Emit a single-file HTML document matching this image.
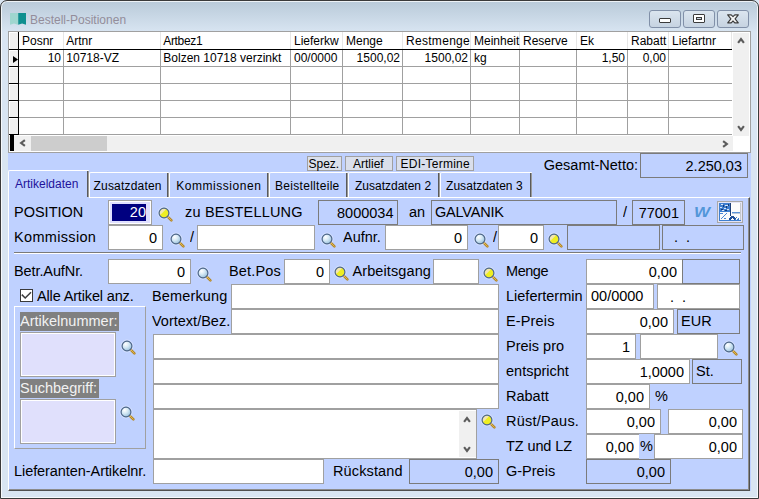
<!DOCTYPE html>
<html><head><meta charset="utf-8"><style>
html,body{margin:0;padding:0;width:759px;height:499px;overflow:hidden;background:#d9e5f2}
#w{position:relative;width:759px;height:499px;overflow:hidden;font-family:"Liberation Sans", sans-serif}
#w div,#w svg,#w span{position:absolute}
.t{white-space:nowrap;color:#000}
</style></head><body><svg width="0" height="0" style="position:absolute"><defs><radialGradient id="gy" cx="0.35" cy="0.3" r="0.8"><stop offset="0" stop-color="#fff8c0"/><stop offset="0.45" stop-color="#f2ec3a"/><stop offset="1" stop-color="#d8cf20"/></radialGradient><radialGradient id="gb" cx="0.35" cy="0.3" r="0.8"><stop offset="0" stop-color="#ffffff"/><stop offset="0.45" stop-color="#d4e8f4"/><stop offset="1" stop-color="#92bcd8"/></radialGradient></defs></svg><div id="w">
<div style="left:0;top:0;width:759px;height:499px;background:#d9e5f2"></div>
<div style="left:0;top:0;width:757px;height:497px;border:1px solid #3a3a3a;border-radius:7px 7px 0 0;background:linear-gradient(#b9cad9 0px,#d6e3f0 29px,#d9e5f2 31px);box-shadow:inset 0 0 0 1px rgba(255,255,255,0.75)"></div>
<svg style="left:10px;top:13px" width="17" height="13" viewBox="0 0 17 13"><path d="M0 0H8V11.8L4 10.6L0 11.8Z" fill="#9fd6cf"/><path d="M8.2 0H16V11.8L12.1 10.6L8.2 11.8Z" fill="#0f8f8f"/></svg>
<span class="t" style="left:30px;top:10.34px;font-size:12px;line-height:20px;color:#938d9a;">Bestell-Positionen</span>
<div style="left:649px;top:10px;width:32px;height:18px;border:1px solid #8190a8;border-radius:3px;box-sizing:border-box;background:linear-gradient(#dbe5ef,#c6d3e1)"></div>
<div style="left:683px;top:10px;width:32px;height:18px;border:1px solid #8190a8;border-radius:3px;box-sizing:border-box;background:linear-gradient(#dbe5ef,#c6d3e1)"></div>
<div style="left:717px;top:10px;width:32px;height:18px;border:1px solid #8190a8;border-radius:3px;box-sizing:border-box;background:linear-gradient(#dbe5ef,#c6d3e1)"></div>
<div style="left:659px;top:18px;width:12px;height:5px;border:1px solid #3b3b3b;box-sizing:border-box;background:#fff;border-radius:1px"></div>
<div style="left:693px;top:14px;width:12px;height:9px;border:1px solid #3b3b3b;box-sizing:border-box;background:#fff;border-radius:1px"><div style="position:absolute;left:2px;top:2px;width:6px;height:3px;border:1px solid #3b3b3b;box-sizing:border-box;background:#c8d4e2"></div></div>
<svg style="left:726.5px;top:13.5px;overflow:visible" width="12" height="10" viewBox="0 0 12 10"><path d="M0.7 0.8H4.2L6 2.6L7.8 0.8H11.3L8.1 4.8L11.3 8.8H7.8L6 7L4.2 8.8H0.7L3.9 4.8Z" fill="#f6f6f6" stroke="#3b3b3b" stroke-width="1.15" stroke-linejoin="round"/></svg>
<div style="left:8px;top:31px;width:743px;height:122px;background:#fff;border:1px solid #a0a0a0;box-sizing:border-box"></div>
<div style="left:9px;top:32px;width:9px;height:103px;background:#f0f0f0"></div>
<div style="left:9px;top:32px;width:1px;height:16px;background:#fff"></div>
<div style="left:9px;top:32px;width:8px;height:1px;background:#fff"></div>
<div style="left:9px;top:50px;width:1px;height:16px;background:#fff"></div>
<div style="left:9px;top:50px;width:8px;height:1px;background:#fff"></div>
<div style="left:9px;top:67px;width:1px;height:16px;background:#fff"></div>
<div style="left:9px;top:67px;width:8px;height:1px;background:#fff"></div>
<div style="left:9px;top:84px;width:1px;height:16px;background:#fff"></div>
<div style="left:9px;top:84px;width:8px;height:1px;background:#fff"></div>
<div style="left:9px;top:101px;width:1px;height:16px;background:#fff"></div>
<div style="left:9px;top:101px;width:8px;height:1px;background:#fff"></div>
<div style="left:9px;top:118px;width:1px;height:16px;background:#fff"></div>
<div style="left:9px;top:118px;width:8px;height:1px;background:#fff"></div>
<div style="left:18px;top:32px;width:1px;height:103px;background:#000"></div>
<div style="left:63px;top:32px;width:1px;height:17px;background:#e6e6e6"></div>
<div style="left:160px;top:32px;width:1px;height:17px;background:#e6e6e6"></div>
<div style="left:290px;top:32px;width:1px;height:17px;background:#e6e6e6"></div>
<div style="left:342px;top:32px;width:1px;height:17px;background:#e6e6e6"></div>
<div style="left:402px;top:32px;width:1px;height:17px;background:#e6e6e6"></div>
<div style="left:470px;top:32px;width:1px;height:17px;background:#e6e6e6"></div>
<div style="left:519px;top:32px;width:1px;height:17px;background:#e6e6e6"></div>
<div style="left:576px;top:32px;width:1px;height:17px;background:#e6e6e6"></div>
<div style="left:627px;top:32px;width:1px;height:17px;background:#e6e6e6"></div>
<div style="left:668px;top:32px;width:1px;height:17px;background:#e6e6e6"></div>
<div style="left:731px;top:32px;width:1px;height:17px;background:#e6e6e6"></div>
<div style="left:9px;top:49px;width:723px;height:1px;background:#000"></div>
<div style="left:9px;top:66px;width:9px;height:1px;background:#000"></div>
<div style="left:19px;top:66px;width:713px;height:1px;background:#a0a0a0"></div>
<div style="left:9px;top:83px;width:9px;height:1px;background:#000"></div>
<div style="left:19px;top:83px;width:713px;height:1px;background:#a0a0a0"></div>
<div style="left:9px;top:100px;width:9px;height:1px;background:#000"></div>
<div style="left:19px;top:100px;width:713px;height:1px;background:#a0a0a0"></div>
<div style="left:9px;top:117px;width:9px;height:1px;background:#000"></div>
<div style="left:19px;top:117px;width:713px;height:1px;background:#a0a0a0"></div>
<div style="left:9px;top:134px;width:9px;height:1px;background:#000"></div>
<div style="left:19px;top:134px;width:713px;height:1px;background:#a0a0a0"></div>
<div style="left:63px;top:50px;width:1px;height:85px;background:#a0a0a0"></div>
<div style="left:160px;top:50px;width:1px;height:85px;background:#a0a0a0"></div>
<div style="left:290px;top:50px;width:1px;height:85px;background:#a0a0a0"></div>
<div style="left:342px;top:50px;width:1px;height:85px;background:#a0a0a0"></div>
<div style="left:402px;top:50px;width:1px;height:85px;background:#a0a0a0"></div>
<div style="left:470px;top:50px;width:1px;height:85px;background:#a0a0a0"></div>
<div style="left:519px;top:50px;width:1px;height:85px;background:#a0a0a0"></div>
<div style="left:576px;top:50px;width:1px;height:85px;background:#a0a0a0"></div>
<div style="left:627px;top:50px;width:1px;height:85px;background:#a0a0a0"></div>
<div style="left:668px;top:50px;width:1px;height:85px;background:#a0a0a0"></div>
<span class="t" style="left:22px;top:30.84px;font-size:12px;line-height:20px;color:#000;">Posnr</span>
<span class="t" style="left:66.2px;top:30.84px;font-size:12px;line-height:20px;color:#000;">Artnr</span>
<span class="t" style="left:163.2px;top:30.84px;font-size:12px;line-height:20px;color:#000;letter-spacing:-0.3px;">Artbez1</span>
<span class="t" style="left:294px;top:30.84px;font-size:12px;line-height:20px;color:#000;">Lieferkw</span>
<span class="t" style="left:346px;top:30.84px;font-size:12px;line-height:20px;color:#000;">Menge</span>
<span class="t" style="left:406px;top:30.84px;font-size:12px;line-height:20px;color:#000;letter-spacing:0.3px;">Restmenge</span>
<span class="t" style="left:474px;top:30.84px;font-size:12px;line-height:20px;color:#000;">Meinheit</span>
<span class="t" style="left:523px;top:30.84px;font-size:12px;line-height:20px;color:#000;">Reserve</span>
<span class="t" style="left:580px;top:30.84px;font-size:12px;line-height:20px;color:#000;">Ek</span>
<span class="t" style="left:631px;top:30.84px;font-size:12px;line-height:20px;color:#000;">Rabatt</span>
<span class="t" style="left:672px;top:30.84px;font-size:12px;line-height:20px;color:#000;">Liefartnr</span>
<span class="t" style="left:-339px;width:400px;text-align:right;top:47.84px;font-size:12px;line-height:20px;color:#000;">10</span>
<span class="t" style="left:66.3px;top:47.84px;font-size:12px;line-height:20px;color:#000;">10718-VZ</span>
<span class="t" style="left:163.3px;top:47.84px;font-size:12px;line-height:20px;color:#000;">Bolzen 10718 verzinkt</span>
<span class="t" style="left:294px;top:47.84px;font-size:12px;line-height:20px;color:#000;">00/0000</span>
<span class="t" style="left:0px;width:400px;text-align:right;top:47.84px;font-size:12px;line-height:20px;color:#000;">1500,02</span>
<span class="t" style="left:68px;width:400px;text-align:right;top:47.84px;font-size:12px;line-height:20px;color:#000;">1500,02</span>
<span class="t" style="left:474px;top:47.84px;font-size:12px;line-height:20px;color:#000;">kg</span>
<span class="t" style="left:225px;width:400px;text-align:right;top:47.84px;font-size:12px;line-height:20px;color:#000;">1,50</span>
<span class="t" style="left:266px;width:400px;text-align:right;top:47.84px;font-size:12px;line-height:20px;color:#000;">0,00</span>
<svg style="left:12px;top:55px" width="7" height="9" viewBox="0 0 7 9"><path d="M1 1L6 4.5L1 8Z" fill="#000"/></svg>
<div style="left:733px;top:33px;width:16px;height:103px;background:#f0f0f0"></div>
<svg style="left:734.5px;top:34.7px;overflow:visible" width="12" height="12" viewBox="-6 -6 12 12"><path d="M-2.9 1.9L0 -1.9L2.9 1.9" stroke="#5c5c5c" stroke-width="2.1" fill="none" stroke-linejoin="miter"/></svg>
<svg style="left:734.5px;top:121.9px;overflow:visible" width="12" height="12" viewBox="-6 -6 12 12"><path d="M-2.9 -1.9L0 1.9L2.9 -1.9" stroke="#5c5c5c" stroke-width="2.1" fill="none" stroke-linejoin="miter"/></svg>
<div style="left:9px;top:136px;width:724px;height:15px;background:#f0f0f0"></div>
<div style="left:10px;top:135px;width:4px;height:16px;background:#000"></div>
<div style="left:31px;top:136px;width:76px;height:15px;background:#cdcdcd"></div>
<svg style="left:16.6px;top:137.4px;overflow:visible" width="12" height="12" viewBox="-6 -6 12 12"><path d="M1.9 -2.9L-1.9 0L1.9 2.9" stroke="#5c5c5c" stroke-width="2.1" fill="none" stroke-linejoin="miter"/></svg>
<svg style="left:719px;top:137.5px;overflow:visible" width="12" height="12" viewBox="-6 -6 12 12"><path d="M-1.9 -2.9L1.9 0L-1.9 2.9" stroke="#5c5c5c" stroke-width="2.1" fill="none" stroke-linejoin="miter"/></svg>
<div style="left:8px;top:153px;width:743px;height:338px;background:#bfd1ff"></div>
<div style="left:307px;top:156px;width:35px;height:15px;background:#dadfeb;border:1px solid #a0a0a0;box-sizing:border-box"></div>
<span class="t" style="left:308.5px;top:153.84px;font-size:12px;line-height:20px;color:#000;">Spez.</span>
<div style="left:345px;top:156px;width:48px;height:15px;background:#dadfeb;border:1px solid #a0a0a0;box-sizing:border-box"></div>
<span class="t" style="left:353px;top:153.84px;font-size:12px;line-height:20px;color:#000;">Artlief</span>
<div style="left:396px;top:156px;width:78px;height:15px;background:#dadfeb;border:1px solid #a0a0a0;box-sizing:border-box"></div>
<span class="t" style="left:400.5px;top:153.84px;font-size:12px;line-height:20px;color:#000;letter-spacing:0.25px;">EDI-Termine</span>
<span class="t" style="left:238px;width:400px;text-align:right;top:154.98px;font-size:14.5px;line-height:20px;color:#000;transform:scaleY(1.05);transform-origin:0 15.02px;">Gesamt-Netto:</span>
<div style="left:640px;top:153px;width:108px;height:25px;background:#bfd1ff;border:1px solid #7b7b7b;box-sizing:border-box"></div>
<span class="t" style="left:342px;width:400px;text-align:right;top:155.98px;font-size:14.5px;line-height:20px;color:#000;transform:scaleY(1.05);transform-origin:0 15.02px;">2.250,03</span>
<div style="left:8px;top:197px;width:742px;height:294px;border-top:1px solid #fff;border-left:1px solid #fff;border-right:1px solid #505050;border-bottom:1px solid #505050;box-sizing:border-box"></div>
<div style="left:9px;top:198px;width:740px;height:292px;border-right:1px solid #8c8c8c;border-bottom:1px solid #8c8c8c;box-sizing:border-box"></div>
<div style="left:8px;top:170px;width:81px;height:29px;background:#bfd1ff;border-top:1px solid #fff;border-left:1px solid #fff;border-radius:2px 1px 0 0;box-sizing:border-box"></div>
<div style="left:87px;top:171px;width:1px;height:26px;background:#5a5a5a"></div>
<div style="left:88px;top:171px;width:1px;height:26px;background:#9a9a9a"></div>
<span class="t" style="left:15px;top:173.84px;font-size:12px;line-height:20px;color:#22139a;">Artikeldaten</span>
<div style="left:89px;top:172px;width:80px;height:25px;background:#bfd1ff;border-top:1px solid #fff;border-left:1px solid #fff;border-radius:2px 1px 0 0;box-sizing:border-box"></div>
<div style="left:167px;top:173px;width:1px;height:24px;background:#5a5a5a"></div>
<div style="left:168px;top:173px;width:1px;height:24px;background:#9a9a9a"></div>
<span class="t" style="left:93.5px;top:175.84px;font-size:12px;line-height:20px;color:#000;letter-spacing:0.2px;">Zusatzdaten</span>
<div style="left:169px;top:172px;width:100px;height:25px;background:#bfd1ff;border-top:1px solid #fff;border-left:1px solid #fff;border-radius:2px 1px 0 0;box-sizing:border-box"></div>
<div style="left:267px;top:173px;width:1px;height:24px;background:#5a5a5a"></div>
<div style="left:268px;top:173px;width:1px;height:24px;background:#9a9a9a"></div>
<span class="t" style="left:176.2px;top:175.84px;font-size:12px;line-height:20px;color:#000;letter-spacing:0.55px;">Kommissionen</span>
<div style="left:269px;top:172px;width:79px;height:25px;background:#bfd1ff;border-top:1px solid #fff;border-left:1px solid #fff;border-radius:2px 1px 0 0;box-sizing:border-box"></div>
<div style="left:346px;top:173px;width:1px;height:24px;background:#5a5a5a"></div>
<div style="left:347px;top:173px;width:1px;height:24px;background:#9a9a9a"></div>
<span class="t" style="left:275px;top:175.84px;font-size:12px;line-height:20px;color:#000;letter-spacing:0.3px;">Beistellteile</span>
<div style="left:348px;top:172px;width:92px;height:25px;background:#bfd1ff;border-top:1px solid #fff;border-left:1px solid #fff;border-radius:2px 1px 0 0;box-sizing:border-box"></div>
<div style="left:438px;top:173px;width:1px;height:24px;background:#5a5a5a"></div>
<div style="left:439px;top:173px;width:1px;height:24px;background:#9a9a9a"></div>
<span class="t" style="left:355px;top:175.84px;font-size:12px;line-height:20px;color:#000;">Zusatzdaten 2</span>
<div style="left:440px;top:172px;width:92px;height:25px;background:#bfd1ff;border-top:1px solid #fff;border-left:1px solid #fff;border-radius:2px 1px 0 0;box-sizing:border-box"></div>
<div style="left:530px;top:173px;width:1px;height:24px;background:#5a5a5a"></div>
<div style="left:531px;top:173px;width:1px;height:24px;background:#9a9a9a"></div>
<span class="t" style="left:446px;top:175.84px;font-size:12px;line-height:20px;color:#000;letter-spacing:0.05px;">Zusatzdaten 3</span>
<span class="t" style="left:14px;top:201.98px;font-size:14.5px;line-height:20px;color:#000;transform:scaleY(1.05);transform-origin:0 15.02px;">POSITION</span>
<div style="left:108px;top:200px;width:44px;height:25px;background:#fff;border:1px solid #a0a0a0;box-sizing:border-box"></div>
<div style="left:110px;top:202px;width:40px;height:21px;background:#e0e0ff"></div>
<div style="left:112px;top:204px;width:34px;height:17px;background:#000080"></div>
<span class="t" style="left:-254px;width:400px;text-align:right;top:201.98px;font-size:14.5px;line-height:20px;color:#fff;transform:scaleY(1.05);transform-origin:0 15.02px;">20</span>
<svg style="left:155.5px;top:205px;overflow:visible" width="18" height="18" viewBox="0 0 18 18"><line x1="11.6" y1="11.6" x2="15.4" y2="15.4" stroke="#b48628" stroke-width="2.6" stroke-linecap="round"/><line x1="12" y1="12" x2="15.2" y2="15.2" stroke="#e2bc52" stroke-width="0.9" stroke-linecap="round"/><circle cx="8" cy="8" r="6" fill="none" stroke="#ffffff" stroke-opacity="0.35" stroke-width="1"/><circle cx="8" cy="8" r="4.7" fill="#eeee22"/><path d="M8 3.3A4.7 4.7 0 0 0 3.3 8L4.5 9.8L9.8 4.5Z" fill="#f2e6b0"/><circle cx="8" cy="8" r="4.9" fill="none" stroke="#4d6686" stroke-width="1.15"/></svg>
<span class="t" style="left:185px;top:201.98px;font-size:14.5px;line-height:20px;color:#000;letter-spacing:0.19px;transform:scaleY(1.05);transform-origin:0 15.02px;">zu BESTELLUNG</span>
<div style="left:318px;top:200px;width:80px;height:25px;background:#bfd1ff;border:1px solid #7b7b7b;box-sizing:border-box"></div>
<span class="t" style="left:-6.5px;width:400px;text-align:right;top:202.98px;font-size:14.5px;line-height:20px;color:#000;transform:scaleY(1.05);transform-origin:0 15.02px;">8000034</span>
<span class="t" style="left:409px;top:201.98px;font-size:14.5px;line-height:20px;color:#000;transform:scaleY(1.05);transform-origin:0 15.02px;">an</span>
<div style="left:431px;top:200px;width:186px;height:25px;background:#bfd1ff;border:1px solid #7b7b7b;box-sizing:border-box"></div>
<span class="t" style="left:435px;top:201.98px;font-size:14.5px;line-height:20px;color:#000;letter-spacing:-0.2px;transform:scaleY(1.05);transform-origin:0 15.02px;">GALVANIK</span>
<span class="t" style="left:623px;top:201.98px;font-size:14.5px;line-height:20px;color:#000;transform:scaleY(1.05);transform-origin:0 15.02px;">/</span>
<div style="left:632px;top:200px;width:53px;height:25px;background:#bfd1ff;border:1px solid #7b7b7b;box-sizing:border-box"></div>
<span class="t" style="left:279px;width:400px;text-align:right;top:202.98px;font-size:14.5px;line-height:20px;color:#000;transform:scaleY(1.05);transform-origin:0 15.02px;">77001</span>
<span class="t" style="left:694px;top:202px;font-size:14.5px;line-height:20px;font-weight:bold;font-style:italic;color:#5296d8;transform:scaleX(1.17);transform-origin:0 0">W</span>
<div style="left:717px;top:201px;width:26px;height:22px;background:#e4e4f4;border:1px solid #a8a8a8;box-sizing:border-box"></div>
<svg style="left:719px;top:203px" width="22" height="18" viewBox="0 0 22 18" shape-rendering="crispEdges"><rect x="0" y="0" width="22" height="18" fill="#fbfbfb"/><rect x="0" y="0" width="11" height="9" fill="#3f7fd0"/><path d="M2 1h2v1h-2zM6 2h3v1h-3zM1 4h2v1h-2zM5 5h2v1h-2zM8 6h2v1h-2zM3 7h2v1h-2z" fill="#d8e6f6"/><path d="M4 2h1v2h-1zM7 3h1v2h-1zM2 6h2v1h-2zM6 7h2v1h-2zM9 1h1v2h-1z" fill="#123a78"/><rect x="11" y="0" width="1" height="13" fill="#1d3f78"/><rect x="12" y="2" width="1" height="10" fill="#ffffff"/><rect x="0" y="9" width="1" height="9" fill="#3f7fd0"/><rect x="0" y="17" width="22" height="1" fill="#3f7fd0"/><path d="M2 15h1v1h-1zM3 14h1v1h-1zM4 13h1v1h-1zM5 12h1v1h-1zM6 11h1v1h-1zM7 10h1v1h-1zM1 10h3v1h-3zM5 15h2v1h-2z" fill="#4a86d4"/><path d="M10 17V15h1v-1h1v-1h3v1h1v1h1v2h-2v-1h-1v-1h-1v1h-1v1z" fill="#1f4f98"/><rect x="13" y="9" width="8" height="1" fill="#5a92d8"/><rect x="13" y="10" width="8" height="1" fill="#b8c8dc"/><path d="M17 14h1v1h-1zM19 15h1v1h-1zM18 16h2v1h-2zM16 16h1v1h-1z" fill="#3f7fd0"/><rect x="21" y="0" width="1" height="17" fill="#c4c8d0"/></svg>
<span class="t" style="left:14px;top:226.98px;font-size:14.5px;line-height:20px;color:#000;letter-spacing:0.33px;transform:scaleY(1.05);transform-origin:0 15.02px;">Kommission</span>
<div style="left:108px;top:225px;width:55px;height:25px;background:#fff;border:1px solid #a0a0a0;box-sizing:border-box"></div>
<span class="t" style="left:-243px;width:400px;text-align:right;top:227.98px;font-size:14.5px;line-height:20px;color:#000;transform:scaleY(1.05);transform-origin:0 15.02px;">0</span>
<svg style="left:167.5px;top:230.5px;overflow:visible" width="18" height="18" viewBox="0 0 18 18"><line x1="11.6" y1="11.6" x2="15.4" y2="15.4" stroke="#b48628" stroke-width="2.6" stroke-linecap="round"/><line x1="12" y1="12" x2="15.2" y2="15.2" stroke="#e2bc52" stroke-width="0.9" stroke-linecap="round"/><circle cx="8" cy="8" r="6" fill="none" stroke="#ffffff" stroke-opacity="0.35" stroke-width="1"/><circle cx="8" cy="8" r="4.7" fill="url(#gb)"/><circle cx="8" cy="8" r="4.9" fill="none" stroke="#4d6686" stroke-width="1.15"/></svg>
<span class="t" style="left:190px;top:226.98px;font-size:14.5px;line-height:20px;color:#000;transform:scaleY(1.05);transform-origin:0 15.02px;">/</span>
<div style="left:197px;top:225px;width:118px;height:25px;background:#fff;border:1px solid #a0a0a0;box-sizing:border-box"></div>
<svg style="left:318.6px;top:230.6px;overflow:visible" width="18" height="18" viewBox="0 0 18 18"><line x1="11.6" y1="11.6" x2="15.4" y2="15.4" stroke="#b48628" stroke-width="2.6" stroke-linecap="round"/><line x1="12" y1="12" x2="15.2" y2="15.2" stroke="#e2bc52" stroke-width="0.9" stroke-linecap="round"/><circle cx="8" cy="8" r="6" fill="none" stroke="#ffffff" stroke-opacity="0.35" stroke-width="1"/><circle cx="8" cy="8" r="4.7" fill="url(#gb)"/><circle cx="8" cy="8" r="4.9" fill="none" stroke="#4d6686" stroke-width="1.15"/></svg>
<span class="t" style="left:343px;top:226.98px;font-size:14.5px;line-height:20px;color:#000;transform:scaleY(1.05);transform-origin:0 15.02px;">Aufnr.</span>
<div style="left:385px;top:225px;width:83px;height:25px;background:#fff;border:1px solid #a0a0a0;box-sizing:border-box"></div>
<span class="t" style="left:62px;width:400px;text-align:right;top:227.98px;font-size:14.5px;line-height:20px;color:#000;transform:scaleY(1.05);transform-origin:0 15.02px;">0</span>
<svg style="left:471.8px;top:230.5px;overflow:visible" width="18" height="18" viewBox="0 0 18 18"><line x1="11.6" y1="11.6" x2="15.4" y2="15.4" stroke="#b48628" stroke-width="2.6" stroke-linecap="round"/><line x1="12" y1="12" x2="15.2" y2="15.2" stroke="#e2bc52" stroke-width="0.9" stroke-linecap="round"/><circle cx="8" cy="8" r="6" fill="none" stroke="#ffffff" stroke-opacity="0.35" stroke-width="1"/><circle cx="8" cy="8" r="4.7" fill="url(#gb)"/><circle cx="8" cy="8" r="4.9" fill="none" stroke="#4d6686" stroke-width="1.15"/></svg>
<span class="t" style="left:493px;top:226.98px;font-size:14.5px;line-height:20px;color:#000;transform:scaleY(1.05);transform-origin:0 15.02px;">/</span>
<div style="left:498px;top:225px;width:46px;height:25px;background:#fff;border:1px solid #a0a0a0;box-sizing:border-box"></div>
<span class="t" style="left:138px;width:400px;text-align:right;top:227.98px;font-size:14.5px;line-height:20px;color:#000;transform:scaleY(1.05);transform-origin:0 15.02px;">0</span>
<svg style="left:545.8px;top:230.6px;overflow:visible" width="18" height="18" viewBox="0 0 18 18"><line x1="11.6" y1="11.6" x2="15.4" y2="15.4" stroke="#b48628" stroke-width="2.6" stroke-linecap="round"/><line x1="12" y1="12" x2="15.2" y2="15.2" stroke="#e2bc52" stroke-width="0.9" stroke-linecap="round"/><circle cx="8" cy="8" r="6" fill="none" stroke="#ffffff" stroke-opacity="0.35" stroke-width="1"/><circle cx="8" cy="8" r="4.7" fill="#eeee22"/><path d="M8 3.3A4.7 4.7 0 0 0 3.3 8L4.5 9.8L9.8 4.5Z" fill="#f2e6b0"/><circle cx="8" cy="8" r="4.9" fill="none" stroke="#4d6686" stroke-width="1.15"/></svg>
<div style="left:567px;top:225px;width:93px;height:25px;background:#bfd1ff;border:1px solid #7b7b7b;box-sizing:border-box"></div>
<div style="left:662px;top:225px;width:82px;height:25px;background:#bfd1ff;border:1px solid #7b7b7b;box-sizing:border-box"></div>
<span class="t" style="left:674px;top:226.98px;font-size:14.5px;line-height:20px;color:#000;transform:scaleY(1.05);transform-origin:0 15.02px;">.&nbsp;&nbsp;.</span>
<div style="left:14px;top:252px;width:727px;height:1px;background:#7a7a7a"></div>
<div style="left:14px;top:253px;width:727px;height:1px;background:#fff"></div>
<span class="t" style="left:14px;top:260.98px;font-size:14.5px;line-height:20px;color:#000;letter-spacing:-0.1px;transform:scaleY(1.05);transform-origin:0 15.02px;">Betr.AufNr.</span>
<div style="left:108px;top:259px;width:83px;height:25px;background:#fff;border:1px solid #a0a0a0;box-sizing:border-box"></div>
<span class="t" style="left:-215px;width:400px;text-align:right;top:261.98px;font-size:14.5px;line-height:20px;color:#000;transform:scaleY(1.05);transform-origin:0 15.02px;">0</span>
<svg style="left:194.5px;top:264.5px;overflow:visible" width="18" height="18" viewBox="0 0 18 18"><line x1="11.6" y1="11.6" x2="15.4" y2="15.4" stroke="#b48628" stroke-width="2.6" stroke-linecap="round"/><line x1="12" y1="12" x2="15.2" y2="15.2" stroke="#e2bc52" stroke-width="0.9" stroke-linecap="round"/><circle cx="8" cy="8" r="6" fill="none" stroke="#ffffff" stroke-opacity="0.35" stroke-width="1"/><circle cx="8" cy="8" r="4.7" fill="url(#gb)"/><circle cx="8" cy="8" r="4.9" fill="none" stroke="#4d6686" stroke-width="1.15"/></svg>
<span class="t" style="left:229px;top:260.98px;font-size:14.5px;line-height:20px;color:#000;letter-spacing:0.15px;transform:scaleY(1.05);transform-origin:0 15.02px;">Bet.Pos</span>
<div style="left:284px;top:259px;width:46px;height:25px;background:#fff;border:1px solid #a0a0a0;box-sizing:border-box"></div>
<span class="t" style="left:-76px;width:400px;text-align:right;top:261.98px;font-size:14.5px;line-height:20px;color:#000;transform:scaleY(1.05);transform-origin:0 15.02px;">0</span>
<svg style="left:331.6px;top:264.3px;overflow:visible" width="18" height="18" viewBox="0 0 18 18"><line x1="11.6" y1="11.6" x2="15.4" y2="15.4" stroke="#b48628" stroke-width="2.6" stroke-linecap="round"/><line x1="12" y1="12" x2="15.2" y2="15.2" stroke="#e2bc52" stroke-width="0.9" stroke-linecap="round"/><circle cx="8" cy="8" r="6" fill="none" stroke="#ffffff" stroke-opacity="0.35" stroke-width="1"/><circle cx="8" cy="8" r="4.7" fill="#eeee22"/><path d="M8 3.3A4.7 4.7 0 0 0 3.3 8L4.5 9.8L9.8 4.5Z" fill="#f2e6b0"/><circle cx="8" cy="8" r="4.9" fill="none" stroke="#4d6686" stroke-width="1.15"/></svg>
<span class="t" style="left:352.5px;top:260.98px;font-size:14.5px;line-height:20px;color:#000;letter-spacing:0.1px;transform:scaleY(1.05);transform-origin:0 15.02px;">Arbeitsgang</span>
<div style="left:433px;top:259px;width:46px;height:25px;background:#fff;border:1px solid #a0a0a0;box-sizing:border-box"></div>
<svg style="left:480.5px;top:265px;overflow:visible" width="18" height="18" viewBox="0 0 18 18"><line x1="11.6" y1="11.6" x2="15.4" y2="15.4" stroke="#b48628" stroke-width="2.6" stroke-linecap="round"/><line x1="12" y1="12" x2="15.2" y2="15.2" stroke="#e2bc52" stroke-width="0.9" stroke-linecap="round"/><circle cx="8" cy="8" r="6" fill="none" stroke="#ffffff" stroke-opacity="0.35" stroke-width="1"/><circle cx="8" cy="8" r="4.7" fill="#eeee22"/><path d="M8 3.3A4.7 4.7 0 0 0 3.3 8L4.5 9.8L9.8 4.5Z" fill="#f2e6b0"/><circle cx="8" cy="8" r="4.9" fill="none" stroke="#4d6686" stroke-width="1.15"/></svg>
<span class="t" style="left:506px;top:260.98px;font-size:14.5px;line-height:20px;color:#000;letter-spacing:-0.45px;transform:scaleY(1.05);transform-origin:0 15.02px;">Menge</span>
<div style="left:586px;top:259px;width:97px;height:25px;background:#fff;border:1px solid #a0a0a0;box-sizing:border-box"></div>
<span class="t" style="left:277px;width:400px;text-align:right;top:261.98px;font-size:14.5px;line-height:20px;color:#000;transform:scaleY(1.05);transform-origin:0 15.02px;">0,00</span>
<div style="left:682px;top:259px;width:58px;height:25px;background:#bfd1ff;border:1px solid #7b7b7b;box-sizing:border-box"></div>
<div style="left:20px;top:289px;width:13px;height:13px;background:#fff;border:1px solid #3a3a3a;box-sizing:border-box"></div>
<svg style="left:21px;top:290px;overflow:visible" width="11" height="11" viewBox="0 0 11 11"><path d="M0.8 4.6L4.2 8L10 2.2" stroke="#3c3c3c" stroke-width="1.5" fill="none"/></svg>
<span class="t" style="left:37px;top:285.98px;font-size:14.5px;line-height:20px;color:#000;letter-spacing:-0.15px;transform:scaleY(1.05);transform-origin:0 15.02px;">Alle Artikel anz.</span>
<span class="t" style="left:152px;top:285.98px;font-size:14.5px;line-height:20px;color:#000;letter-spacing:0.14px;transform:scaleY(1.05);transform-origin:0 15.02px;">Bemerkung</span>
<div style="left:231px;top:284px;width:268px;height:25px;background:#fff;border:1px solid #a0a0a0;box-sizing:border-box"></div>
<span class="t" style="left:506px;top:285.98px;font-size:14.5px;line-height:20px;color:#000;transform:scaleY(1.05);transform-origin:0 15.02px;">Liefertermin</span>
<div style="left:586px;top:284px;width:68px;height:25px;background:#fff;border:1px solid #a0a0a0;box-sizing:border-box"></div>
<span class="t" style="left:591px;top:285.98px;font-size:14.5px;line-height:20px;color:#000;transform:scaleY(1.05);transform-origin:0 15.02px;">00/0000</span>
<div style="left:657px;top:284px;width:83px;height:25px;background:#fff;border:1px solid #a0a0a0;box-sizing:border-box"></div>
<span class="t" style="left:670px;top:286.98px;font-size:14.5px;line-height:20px;color:#000;transform:scaleY(1.05);transform-origin:0 15.02px;">.&nbsp;&nbsp;.</span>
<div style="left:14px;top:306px;width:132px;height:143px;border-top:1px solid #fff;border-left:1px solid #fff;border-right:1px solid #a0a0a0;border-bottom:1px solid #a0a0a0;box-sizing:border-box"></div>
<div style="left:20px;top:312px;width:99px;height:19px;background:#808080"></div>
<span class="t" style="left:20px;top:310.98px;font-size:14.5px;line-height:20px;color:#f2f2f2;transform:scaleY(1.05);transform-origin:0 15.02px;">Artikelnummer:</span>
<div style="left:20px;top:332px;width:96px;height:45px;background:#e0e0fc;border:1px solid #a0a0a0;outline:1px solid #fff;outline-offset:-2px;box-sizing:border-box"></div>
<svg style="left:118.5px;top:337.5px;overflow:visible" width="18" height="18" viewBox="0 0 18 18"><line x1="11.6" y1="11.6" x2="15.4" y2="15.4" stroke="#b48628" stroke-width="2.6" stroke-linecap="round"/><line x1="12" y1="12" x2="15.2" y2="15.2" stroke="#e2bc52" stroke-width="0.9" stroke-linecap="round"/><circle cx="8" cy="8" r="6" fill="none" stroke="#ffffff" stroke-opacity="0.35" stroke-width="1"/><circle cx="8" cy="8" r="4.7" fill="url(#gb)"/><circle cx="8" cy="8" r="4.9" fill="none" stroke="#4d6686" stroke-width="1.15"/></svg>
<div style="left:20px;top:379px;width:79px;height:19px;background:#808080"></div>
<span class="t" style="left:20px;top:377.98px;font-size:14.5px;line-height:20px;color:#f2f2f2;transform:scaleY(1.05);transform-origin:0 15.02px;">Suchbegriff:</span>
<div style="left:20px;top:399px;width:96px;height:45px;background:#e0e0fc;border:1px solid #a0a0a0;outline:1px solid #fff;outline-offset:-2px;box-sizing:border-box"></div>
<svg style="left:118px;top:404.4px;overflow:visible" width="18" height="18" viewBox="0 0 18 18"><line x1="11.6" y1="11.6" x2="15.4" y2="15.4" stroke="#b48628" stroke-width="2.6" stroke-linecap="round"/><line x1="12" y1="12" x2="15.2" y2="15.2" stroke="#e2bc52" stroke-width="0.9" stroke-linecap="round"/><circle cx="8" cy="8" r="6" fill="none" stroke="#ffffff" stroke-opacity="0.35" stroke-width="1"/><circle cx="8" cy="8" r="4.7" fill="url(#gb)"/><circle cx="8" cy="8" r="4.9" fill="none" stroke="#4d6686" stroke-width="1.15"/></svg>
<span class="t" style="left:152px;top:310.98px;font-size:14.5px;line-height:20px;color:#000;transform:scaleY(1.05);transform-origin:0 15.02px;">Vortext/Bez.</span>
<div style="left:231px;top:309px;width:268px;height:25px;background:#fff;border:1px solid #a0a0a0;box-sizing:border-box"></div>
<div style="left:153px;top:334px;width:346px;height:25px;background:#fff;border:1px solid #a0a0a0;box-sizing:border-box"></div>
<div style="left:153px;top:359px;width:346px;height:25px;background:#fff;border:1px solid #a0a0a0;box-sizing:border-box"></div>
<div style="left:153px;top:384px;width:346px;height:25px;background:#fff;border:1px solid #a0a0a0;box-sizing:border-box"></div>
<div style="left:153px;top:409px;width:324px;height:50px;background:#fff;border:1px solid #a0a0a0;box-sizing:border-box"></div>
<div style="left:459px;top:411px;width:17px;height:46px;background:#f0f0f0"></div>
<svg style="left:460.7px;top:414.2px;overflow:visible" width="12" height="12" viewBox="-6 -6 12 12"><path d="M-2.9 1.9L0 -1.9L2.9 1.9" stroke="#5c5c5c" stroke-width="2.1" fill="none" stroke-linejoin="miter"/></svg>
<svg style="left:460.7px;top:442.8px;overflow:visible" width="12" height="12" viewBox="-6 -6 12 12"><path d="M-2.9 -1.9L0 1.9L2.9 -1.9" stroke="#5c5c5c" stroke-width="2.1" fill="none" stroke-linejoin="miter"/></svg>
<svg style="left:478.9px;top:411.8px;overflow:visible" width="18" height="18" viewBox="0 0 18 18"><line x1="11.6" y1="11.6" x2="15.4" y2="15.4" stroke="#b48628" stroke-width="2.6" stroke-linecap="round"/><line x1="12" y1="12" x2="15.2" y2="15.2" stroke="#e2bc52" stroke-width="0.9" stroke-linecap="round"/><circle cx="8" cy="8" r="6" fill="none" stroke="#ffffff" stroke-opacity="0.35" stroke-width="1"/><circle cx="8" cy="8" r="4.7" fill="#eeee22"/><path d="M8 3.3A4.7 4.7 0 0 0 3.3 8L4.5 9.8L9.8 4.5Z" fill="#f2e6b0"/><circle cx="8" cy="8" r="4.9" fill="none" stroke="#4d6686" stroke-width="1.15"/></svg>
<span class="t" style="left:14px;top:460.98px;font-size:14.5px;line-height:20px;color:#000;letter-spacing:-0.07px;transform:scaleY(1.05);transform-origin:0 15.02px;">Lieferanten-Artikelnr.</span>
<div style="left:153px;top:459px;width:171px;height:25px;background:#fff;border:1px solid #a0a0a0;box-sizing:border-box"></div>
<span class="t" style="left:333px;top:460.98px;font-size:14.5px;line-height:20px;color:#000;letter-spacing:0.12px;transform:scaleY(1.05);transform-origin:0 15.02px;">Rückstand</span>
<div style="left:409px;top:459px;width:90px;height:25px;background:#bfd1ff;border:1px solid #7b7b7b;box-sizing:border-box"></div>
<span class="t" style="left:93px;width:400px;text-align:right;top:461.98px;font-size:14.5px;line-height:20px;color:#000;transform:scaleY(1.05);transform-origin:0 15.02px;">0,00</span>
<span class="t" style="left:506px;top:310.98px;font-size:14.5px;line-height:20px;color:#000;letter-spacing:0.15px;transform:scaleY(1.05);transform-origin:0 15.02px;">E-Preis</span>
<span class="t" style="left:506px;top:335.98px;font-size:14.5px;line-height:20px;color:#000;transform:scaleY(1.05);transform-origin:0 15.02px;">Preis pro</span>
<span class="t" style="left:506px;top:360.98px;font-size:14.5px;line-height:20px;color:#000;transform:scaleY(1.05);transform-origin:0 15.02px;">entspricht</span>
<span class="t" style="left:506px;top:385.98px;font-size:14.5px;line-height:20px;color:#000;transform:scaleY(1.05);transform-origin:0 15.02px;">Rabatt</span>
<span class="t" style="left:506px;top:410.98px;font-size:14.5px;line-height:20px;color:#000;letter-spacing:0.22px;transform:scaleY(1.05);transform-origin:0 15.02px;">Rüst/Paus.</span>
<span class="t" style="left:506px;top:435.98px;font-size:14.5px;line-height:20px;color:#000;letter-spacing:-0.1px;transform:scaleY(1.05);transform-origin:0 15.02px;">TZ und LZ</span>
<span class="t" style="left:506px;top:460.98px;font-size:14.5px;line-height:20px;color:#000;transform:scaleY(1.05);transform-origin:0 15.02px;">G-Preis</span>
<div style="left:586px;top:309px;width:88px;height:25px;background:#fff;border:1px solid #a0a0a0;box-sizing:border-box"></div>
<span class="t" style="left:268px;width:400px;text-align:right;top:311.98px;font-size:14.5px;line-height:20px;color:#000;transform:scaleY(1.05);transform-origin:0 15.02px;">0,00</span>
<div style="left:677px;top:309px;width:63px;height:25px;background:#bfd1ff;border:1px solid #7b7b7b;box-sizing:border-box"></div>
<span class="t" style="left:681px;top:310.98px;font-size:14.5px;line-height:20px;color:#000;transform:scaleY(1.05);transform-origin:0 15.02px;">EUR</span>
<div style="left:586px;top:334px;width:50px;height:25px;background:#fff;border:1px solid #a0a0a0;box-sizing:border-box"></div>
<span class="t" style="left:230px;width:400px;text-align:right;top:336.98px;font-size:14.5px;line-height:20px;color:#000;transform:scaleY(1.05);transform-origin:0 15.02px;">1</span>
<div style="left:640px;top:334px;width:78px;height:25px;background:#fff;border:1px solid #a0a0a0;box-sizing:border-box"></div>
<svg style="left:721.2px;top:339.4px;overflow:visible" width="18" height="18" viewBox="0 0 18 18"><line x1="11.6" y1="11.6" x2="15.4" y2="15.4" stroke="#b48628" stroke-width="2.6" stroke-linecap="round"/><line x1="12" y1="12" x2="15.2" y2="15.2" stroke="#e2bc52" stroke-width="0.9" stroke-linecap="round"/><circle cx="8" cy="8" r="6" fill="none" stroke="#ffffff" stroke-opacity="0.35" stroke-width="1"/><circle cx="8" cy="8" r="4.7" fill="url(#gb)"/><circle cx="8" cy="8" r="4.9" fill="none" stroke="#4d6686" stroke-width="1.15"/></svg>
<div style="left:586px;top:359px;width:104px;height:25px;background:#fff;border:1px solid #a0a0a0;box-sizing:border-box"></div>
<span class="t" style="left:284px;width:400px;text-align:right;top:361.98px;font-size:14.5px;line-height:20px;color:#000;transform:scaleY(1.05);transform-origin:0 15.02px;">1,0000</span>
<div style="left:692px;top:359px;width:50px;height:25px;background:#bfd1ff;border:1px solid #7b7b7b;box-sizing:border-box"></div>
<span class="t" style="left:696px;top:360.98px;font-size:14.5px;line-height:20px;color:#000;transform:scaleY(1.05);transform-origin:0 15.02px;">St.</span>
<div style="left:586px;top:384px;width:64px;height:25px;background:#fff;border:1px solid #a0a0a0;box-sizing:border-box"></div>
<span class="t" style="left:244px;width:400px;text-align:right;top:386.98px;font-size:14.5px;line-height:20px;color:#000;transform:scaleY(1.05);transform-origin:0 15.02px;">0,00</span>
<span class="t" style="left:655px;top:385.98px;font-size:14.5px;line-height:20px;color:#000;transform:scaleY(1.05);transform-origin:0 15.02px;">%</span>
<div style="left:586px;top:409px;width:75px;height:25px;background:#fff;border:1px solid #a0a0a0;box-sizing:border-box"></div>
<span class="t" style="left:255px;width:400px;text-align:right;top:411.98px;font-size:14.5px;line-height:20px;color:#000;transform:scaleY(1.05);transform-origin:0 15.02px;">0,00</span>
<div style="left:668px;top:409px;width:75px;height:25px;background:#fff;border:1px solid #a0a0a0;box-sizing:border-box"></div>
<span class="t" style="left:337px;width:400px;text-align:right;top:411.98px;font-size:14.5px;line-height:20px;color:#000;transform:scaleY(1.05);transform-origin:0 15.02px;">0,00</span>
<div style="left:586px;top:434px;width:54px;height:25px;background:#fff;border:1px solid #a0a0a0;box-sizing:border-box"></div>
<span class="t" style="left:234px;width:400px;text-align:right;top:436.98px;font-size:14.5px;line-height:20px;color:#000;transform:scaleY(1.05);transform-origin:0 15.02px;">0,00</span>
<div style="left:639px;top:434px;width:15px;height:25px;background:#bfd1ff"></div>
<span class="t" style="left:640px;top:435.98px;font-size:14.5px;line-height:20px;color:#000;transform:scaleY(1.05);transform-origin:0 15.02px;">%</span>
<div style="left:654px;top:434px;width:89px;height:25px;background:#fff;border:1px solid #a0a0a0;box-sizing:border-box"></div>
<span class="t" style="left:337px;width:400px;text-align:right;top:436.98px;font-size:14.5px;line-height:20px;color:#000;transform:scaleY(1.05);transform-origin:0 15.02px;">0,00</span>
<div style="left:586px;top:459px;width:85px;height:25px;background:#bfd1ff;border:1px solid #7b7b7b;box-sizing:border-box"></div>
<span class="t" style="left:265px;width:400px;text-align:right;top:461.98px;font-size:14.5px;line-height:20px;color:#000;transform:scaleY(1.05);transform-origin:0 15.02px;">0,00</span>
</div></body></html>
